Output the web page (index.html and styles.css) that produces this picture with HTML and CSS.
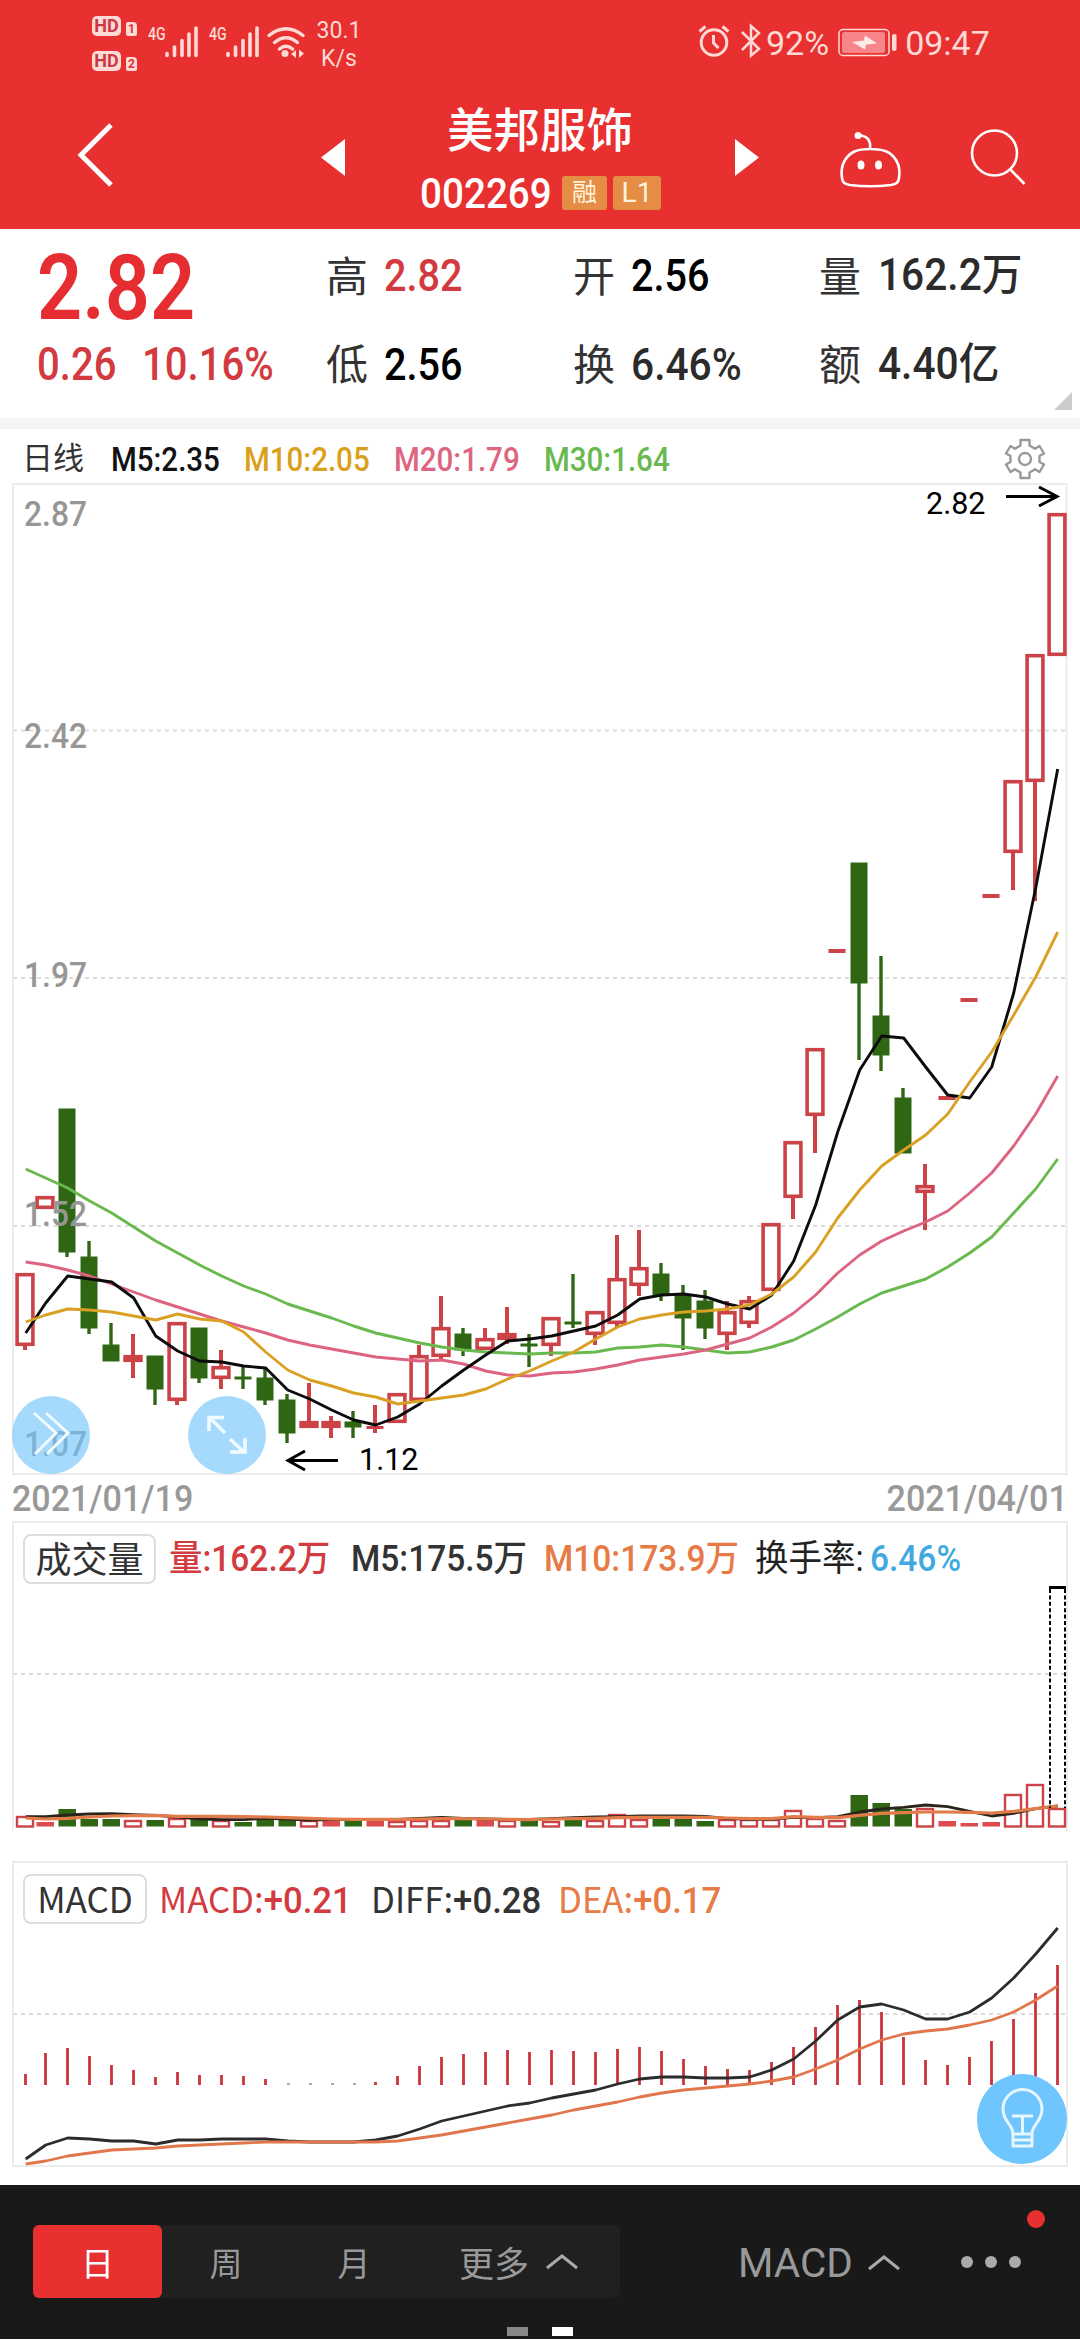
FILE: index.html
```html
<!DOCTYPE html>
<html lang="zh-CN">
<head>
<meta charset="utf-8">
<title>美邦服饰 002269</title>
<link rel="stylesheet" href="styles.css">
</head>
<body>
<header class="top">
  <div class="status">
    <div class="hd-stack">
      <div class="hd"><b>HD</b><i>1</i></div>
      <div class="hd"><b>HD</b><i>2</i></div>
    </div>
    <div class="signal"><span>4G</span><svg width="33" height="32" viewBox="0 0 33 32"><path d="M2 27.5v2M9.500 21v8.500M17 14.500v15M24 8v21.500M31 2v27.500"/></svg></div>
    <div class="signal"><span>4G</span><svg width="33" height="32" viewBox="0 0 33 32"><path d="M2 27.5v2M9.500 21v8.500M17 14.500v15M24 8v21.500M31 2v27.500"/></svg></div>
    <svg class="wifi" width="38" height="32" viewBox="0 0 38 32"><path d="M2 8.500Q19-5 36 8.500M7.500 15.500Q19 6 30.500 15.500M12.500 22Q19 16.500 25.500 22" fill="none" stroke="currentColor" stroke-width="3.500" stroke-linecap="round"/><circle cx="18" cy="26.500" r="3.500" fill="currentColor"/><path d="M29 23v8l-5-4zM32 22.500v8.500l5-4.500z" fill="currentColor"/></svg>
    <div class="speed">30.1<br>K/s</div>
    <div class="status-right">
      <svg width="32" height="34" viewBox="0 0 32 34" fill="none" stroke="currentColor" stroke-width="3"><circle cx="16" cy="18.500" r="12.800"/><path d="M15.500 11v8l5 5M1.500 7.500l6-5M24.500 2.500l6 5"/></svg>
      <svg class="bt" width="22" height="34" viewBox="0 0 22 34" fill="none" stroke="currentColor" stroke-width="2.500"><path d="M2 8l17 17-8 6.500V2l8 7L2 26"/></svg>
      <span class="pct">92%</span>
      <svg class="battery" width="60" height="30" viewBox="0 0 60 30"><rect x="1" y="1.500" width="50" height="26" rx="4" fill="none" stroke="currentColor" stroke-width="1.500"/><rect x="4" y="4" width="43" height="21" rx="2" fill="#f8858a"/><path d="M14 14l12-1.500 1-5 12 8-11 1-1 5z" fill="#ffeae6"/><rect x="54" y="6" width="4.500" height="17" rx="2" fill="currentColor"/></svg>
      <span>09:47</span>
    </div>
  </div>
  <nav class="titlebar">
    <svg class="back" width="40" height="70" viewBox="0 0 40 70"><path d="M36 5L6 35l30 30" fill="none" stroke="#fff" stroke-width="5"/></svg>
    <svg class="prev" width="24" height="37" viewBox="0 0 24 37"><path d="M24 0v37L0 18.500z" fill="#fff"/></svg>
    <div class="name">
      <h1>美邦服饰</h1>
      <div class="code"><span class="din">002269</span><em>融</em><em>L1</em></div>
    </div>
    <svg class="next" width="24" height="37" viewBox="0 0 24 37"><path d="M0 0v37l24-18.500z" fill="#fff"/></svg>
    <svg class="robot" width="64" height="60" viewBox="0 0 64 60" fill="none" stroke="#fff" stroke-width="2.600"><path d="M32 21c14 0 21 3 26 11 3 5 4 12 3 18-.6 5-3 6-8 7-12 1.500-29 1.500-41 0-5-.8-7.500-2-8-7-1-6 0-13 3-18 5-8 12-11 25-11zM32 21c1-9-3-13.500-11-13.500"/><circle cx="20" cy="7.500" r="3.500" fill="#fff" stroke="none"/><ellipse cx="23" cy="37" rx="3.500" ry="4.500" fill="#fff" stroke="none"/><ellipse cx="40.500" cy="37" rx="3.500" ry="4.500" fill="#fff" stroke="none"/></svg>
    <svg class="search" width="58" height="58" viewBox="0 0 58 58" fill="none" stroke="#fff" stroke-width="2.600"><circle cx="25.500" cy="25" r="22.500"/><path d="M41 41l14.500 15"/></svg>
  </nav>
</header>

<section class="quote">
  <div class="price din">2.82</div>
  <div class="change"><span class="din">0.26</span><span class="din">10.16%</span></div>
  <dl class="c-high"><dt>高</dt><dd class="din up">2.82</dd></dl>
  <dl class="c-open"><dt>开</dt><dd class="din">2.56</dd></dl>
  <dl class="c-vol soft"><dt>量</dt><dd class="mix">162.2万</dd></dl>
  <dl class="c-low"><dt>低</dt><dd class="din">2.56</dd></dl>
  <dl class="c-turn soft"><dt>换</dt><dd class="din">6.46%</dd></dl>
  <dl class="c-amt soft"><dt>额</dt><dd class="mix">4.40亿</dd></dl>
  <i class="corner"></i>
</section>

<section class="ma-row">
  <span class="period">日线</span>
  <span class="din m5">M5:2.35</span>
  <span class="din m10">M10:2.05</span>
  <span class="din m20">M20:1.79</span>
  <span class="din m30">M30:1.64</span>
  <svg class="gear" width="42" height="42" viewBox="0 0 42 42" fill="none" stroke="#999" stroke-width="2.400" stroke-linejoin="round"><path d="M16.500 2h9v5.500l5.500 3.300 4.500-2.800 4.500 7.500-4.500 2.500v6l4.500 2.500-4.500 7.500-4.500-2.800-5.500 3.300V40h-9v-5.500L11 31.200 6.500 34 2 26.500 6.500 24v-6L2 15.500 6.500 8l4.500 2.800 5.500-3.300z"/><circle cx="21" cy="21" r="6"/></svg>
</section>

<section class="kline">
  <svg id="kline" width="1080" height="992" viewBox="0 483 1080 992"></svg>
  <button class="float expand"><svg width="78" height="78" viewBox="0 0 78 78"><path d="M22 17l22 20-21 21M34 17l22 20-21 21"/></svg></button>
  <button class="float full"><svg width="78" height="78" viewBox="0 0 78 78"><path d="M37 37L22 22M21 35V21.500h15M42 43l15 14M57 42v14H42" /></svg></button>
</section>
<div class="dates"><span class="din">2021/01/19</span><span class="din end">2021/04/01</span></div>

<section class="panel volume">
  <div class="legend">
    <span class="pill">成交量</span>
    <span class="v1">量:162.2万</span>
    <span class="v2">M5:175.5万</span>
    <span class="v3">M10:173.9万</span>
    <span class="v4">换手率:</span>
    <span class="v5">6.46%</span>
  </div>
  <svg id="volume" width="1080" height="248" viewBox="0 1584 1080 248"></svg>
</section>

<section class="panel macd">
  <div class="legend">
    <span class="pill">MACD</span>
    <span class="d1"><u>MACD:</u>+0.21</span>
    <span class="d2"><u>DIFF:</u>+0.28</span>
    <span class="d3"><u>DEA:</u>+0.17</span>
  </div>
  <svg id="macd" width="1080" height="242" viewBox="0 1924 1080 242"></svg>
  <button class="bulb"><svg width="90" height="90" viewBox="0 0 90 90" fill="none" stroke="#e6f6ff" stroke-width="3"><path d="M36 60c0-10-10-12-10-25a19 19 0 0 1 39 0c0 13-10 15-10 25zM36 60v12h19V60M36 66h19M35 42h21M45.500 42v17" stroke-linejoin="round"/></svg></button>
</section>

<footer class="tabs">
  <div class="segment">
    <button class="active">日</button><button>周</button><button>月</button>
    <button class="more">更多<svg width="34" height="20" viewBox="0 0 34 20"><path d="M2 16L17 4l15 12"/></svg></button>
  </div>
  <button class="indicator">MACD<svg width="34" height="20" viewBox="0 0 34 20"><path d="M2 16L17 4l15 12"/></svg></button>
  <div class="dots"><i></i><i></i><i></i><b></b></div>
  <div class="pages"><i></i><i class="on"></i></div>
</footer>
<script src="chart.js"></script>
</body>
</html>
```
FILE: styles.css
```css
* { box-sizing: border-box; margin: 0; padding: 0; }
body {
  width: 1080px; height: 2340px; overflow: hidden; background: #fff; color: #000;
  font-family: Roboto, "Noto Sans CJK SC", sans-serif;
  display: flex; flex-direction: column;
}
button { border: 0; background: none; font: inherit; color: inherit; }
svg { display: block; flex: none; overflow: visible; }
i, em { font-style: normal; }
u { text-decoration: none; }
.din { display: inline-block; font-weight: 500; transform: scaleX(.88); transform-origin: left center; white-space: nowrap; }

.top { height: 229px; background: #e83030; color: #ffd9d4; }
.status { height: 80px; display: flex; align-items: flex-start; padding-left: 92px; }
.hd-stack { display: flex; flex-direction: column; gap: 14px; margin-top: 15px; width: 56px; }
.hd { display: flex; gap: 5px; align-items: flex-end; height: 21px; }
.hd b { width: 29px; height: 20px; border-radius: 5px; background: #ffd9d4; color: #c93a44; font: 700 18px/20px Roboto, sans-serif; text-align: center; }
.hd i { width: 11px; height: 14px; border-radius: 2px 4px 2px 2px; background: #ffd9d4; color: #d43138; font: 700 12px/14px Roboto, sans-serif; text-align: center; }
.signal { display: flex; width: 61px; padding-top: 26px; }
.signal span { font-size: 19px; line-height: 16px; font-weight: 500; width: 25px; transform: scaleX(.74); transform-origin: left; margin-right: -8px; }
.signal svg { stroke: currentColor; stroke-width: 3.600; stroke-linecap: round; }
.wifi { margin: 27px 0 0 -3px; }
.speed { margin: 17px 0 0 11px; font-size: 23px; line-height: 28px; text-align: center; width: 46px; }
.status-right { display: flex; margin: 24px 0 0 336px; font-size: 34px; line-height: 38px; }
.status-right .bt { margin-left: 10px; }
.status-right .pct { margin: 0 9px 0 4px; }
.status-right .battery { margin: 4px 7px 0 0; }
.titlebar { height: 149px; display: flex; align-items: flex-start; }
.back { margin: 40px 0 0 75px; }
.prev { margin: 59px 0 0 206px; }
.name { width: 390px; text-align: center; color: #fff; padding-top: 23px; }
.name h1 { font-size: 46.500px; line-height: 56px; font-weight: 500; }
.code { display: flex; padding: 16px 0 0 75px; align-items: center; height: 52px; }
.code .din { font-size: 42px; width: 142px; transform: scaleX(.92); text-align: left; }
.code em { height: 34px; width: 45px; background: #e58d45; border-radius: 3px; font-size: 25px; line-height: 34px; color: #fff3dd; margin-right: 6px; }
.code em + em { width: 48px; font-size: 28px; }
.next { margin: 59px 0 0 0; }
.robot { margin: 48px 0 0 79px; }
.robot + .search { margin: 48px 0 0 67px; }

.quote {
  position: relative; height: 200px; border-bottom: 11px solid #f5f5f5; padding: 4px 0 0 37px;
  display: grid; grid-template: 86px 88px / 289px 247px 246px 1fr; color: #000;
  grid-template-areas: "price high open vol" "change low turn amt";
}
.price { grid-area: price; font-size: 91px; font-weight: 600; line-height: 111px; color: #e62d31; transform: scaleX(.87); }
.change { grid-area: change; display: grid; grid-template-columns: 105px auto; font-size: 45.500px; line-height: 92px; color: #d33a40; }
.quote dl { display: grid; grid-template-columns: 58px 1fr; line-height: 86px; white-space: nowrap; }
.quote dt { font-size: 42px; line-height: 82px; color: #333; font-family: "Noto Sans CJK SC", sans-serif; }
.quote dd { font-size: 45px; }
.c-high { grid-area: high; } .c-open { grid-area: open; } .c-vol { grid-area: vol; }
.c-low { grid-area: low; } .c-turn { grid-area: turn; } .c-amt { grid-area: amt; }
.quote .c-low, .quote .c-turn, .quote .c-amt { line-height: 91px; }
.c-low dt, .c-turn dt, .c-amt dt { line-height: 86px !important; }
.quote .up { color: #d33a40; }
.soft { color: #2b2b2b; }
.c-turn .din { transform: scaleX(.905); }
.mix { font-weight: 500; font-size: 43.500px !important; transform: scaleX(.935); transform-origin: left; margin-left: 1px; }
.corner { position: absolute; right: 8px; bottom: 8px; border-left: 18px solid transparent; border-bottom: 18px solid #ccc; }

.ma-row { height: 54px; padding-left: 22px; display: grid; grid-template-columns: 89px 133px 150px 150px 460px 42px; line-height: 61px; font-size: 34px; color: #111; }
.ma-row .din { transform: scaleX(.868); }
.period { font-size: 31px; line-height: 60px; color: #333; }
.m10 { color: #dba01b; } .m20 { color: #dd6580; } .m30 { color: #69b850; }
.gear { margin-top: 9px; }

.kline { position: relative; height: 992px; }
.float { position: absolute; top: 913px; width: 78px; height: 78px; border-radius: 50%; background: rgba(110, 196, 252, .62); }
.float path { fill: none; stroke: #f2faff; stroke-width: 3; }
.expand { left: 12px; } .full { left: 188px; }
.full path { stroke-width: 3.500; }
.dates { height: 46px; display: flex; justify-content: space-between; padding: 0 12px; font-size: 36px; line-height: 48px; color: #999; }
.dates .din { transform: scaleX(.945); }
.dates .end { transform-origin: right center; }

.panel { position: relative; margin: 0 12px; border: 2px solid #ececec; }
.panel > svg { margin-left: -14px; }
.volume { height: 310px; border-bottom: 0; }
.macd { height: 306px; margin-top: 30px; }
.legend { height: 61px; padding: 11px 0 0 9px; display: grid; font-size: 36px; line-height: 50px; font-weight: 500; white-space: nowrap; }
.legend span { transform-origin: left center; }
.legend .pill { height: 50px; line-height: 43px; border: 2px solid #ddd; border-radius: 8px; text-align: center; font-weight: 400; color: #333; font-family: "Noto Sans CJK SC", sans-serif; font-size: 36px; }
.volume .legend { grid-template-columns: 133px 195px 193px 211px 112px auto; }
.volume .legend .v1 { margin-left: 13px; }
.volume .legend span:not(.pill) { transform: scaleX(.93); }
.v1 { color: #d23b40; } .v2 { color: #333; } .v3 { color: #e77a45; }
.volume .legend .v4 { color: #222; font-weight: 400; font-size: 36px; transform: none; }
.volume .legend .v5 { color: #41a9e0; transform: scaleX(.9); margin-left: 3px; }
.macd .legend { grid-template-columns: 124px 224px 187px auto; font-size: 36px; line-height: 46px; }
.macd u { font-weight: 400; font-family: "Noto Sans CJK SC", sans-serif; }
.macd .legend .pill { font-size: 35px; }
.d1 { margin-left: 12px; color: #d23b40; } .d2 { color: #333; } .d3 { color: #e77a45; }
.macd .legend span:not(.pill) { transform: scaleX(.965); }
.bulb { position: absolute; left: 963px; top: 211px; width: 90px; height: 90px; border-radius: 50%; background: #6fc5fd; }

.tabs { position: relative; margin-top: 18px; height: 154px; background: #191919; color: #999; display: flex; align-items: flex-start; padding: 40px 0 0 33px; font-family: "Noto Sans CJK SC", sans-serif; }
.segment { width: 587px; height: 73px; background: #202020; display: flex; border-radius: 5px; }
.segment button { width: 128px; font-size: 33px; }
.segment .active { background: #e83030; color: #fff; border-radius: 6px; width: 129px; }
.segment .more { width: auto; padding-left: 41px; display: flex; align-items: center; gap: 16px; font-size: 35px; }
.tabs svg path { fill: none; stroke: #aaa; stroke-width: 3; }
.indicator { display: flex; align-items: center; gap: 14px; margin-left: 118px; height: 76px; font: 400 40.500px Roboto, sans-serif; }
.dots { position: relative; display: flex; gap: 12px; margin: 31px 0 0 60px; }
.dots i { width: 12px; height: 12px; border-radius: 50%; background: #aaa; }
.dots b { position: absolute; left: 66px; top: -46px; width: 18px; height: 18px; border-radius: 50%; background: #e83030; }
.pages { position: absolute; left: 507px; bottom: 3px; display: flex; gap: 24px; }
.pages i { width: 21px; height: 9px; background: #888; }
.pages .on { background: #fff; }
```
FILE: chart.js
```js
const X = i => (i === 0 ? 25 : 23 + 22 * i);
const RED = '#cb4247', GREEN = '#2e6614';
const line = (ys, color, w) =>
  `<polyline fill="none" stroke="${color}" stroke-width="${w}" stroke-linejoin="round" points="${ys.map((y, i) => (X(i) + 0.7) + ',' + y).join(' ')}"/>`;
const grid = y => `<path d="M13 ${y}H1066" stroke="#dcdcdc" stroke-width="2" stroke-dasharray="4 4"/>`;

// colour, body top, body bottom, high, low
const candles = [
  ['r',1273,1346,1273,1350],['r',1196,1209],['g',1109,1252,1109,1257],['g',1257,1328,1241,1334],
  ['g',1345,1361,1323,1361],['r',1355,1362,1334,1378],['g',1356,1389,1356,1405],['r',1322,1401,1322,1405],
  ['g',1328,1378,1328,1383],['r',1366,1379,1350,1389],['g',1377,1379,1367,1389],['g',1378,1400,1367,1405],
  ['g',1400,1433,1394,1443],['r',1421,1428,1383,1428],['r',1421,1428,1416,1438],['g',1422,1427,1411,1438],
  ['r',1426,1429,1405,1433],['r',1393,1423],['r',1355,1401,1345,1401],['r',1327,1357,1296,1359],
  ['g',1334,1350,1328,1356],['r',1338,1350,1328,1350],['r',1333,1340,1307,1344],['g',1344,1346,1334,1367],
  ['r',1317,1346,1317,1356],['g',1322,1324,1274,1328],['r',1311,1335,1311,1345],['r',1278,1324,1235,1328],
  ['r',1267,1286,1230,1296],['g',1274,1295,1263,1301],['g',1295,1318,1285,1350],['g',1301,1328,1290,1339],
  ['r',1311,1335,1301,1350],['r',1300,1324,1296,1328],['r',1223,1291],['r',1141,1198,1141,1219],
  ['r',1048,1116,1048,1153],['r',949,953],['g',863,983,863,1060],['g',1016,1055,956,1071],
  ['g',1098,1153,1088,1153],['r',1185,1193,1164,1230],['r',1096,1100],['r',998,1002],
  ['r',894,898],['r',780,853,780,890],['r',654,782,654,901],['r',513,656]
];
const m5 = [1333,1303,1276,1279,1282,1298,1336,1351,1361,1362,1366,1368,1390,1399,1410,1420,1425,1417,1404,1386,1370,1355,1341,1339,1336,1331,1326,1315,1299,1295,1294,1297,1304,1309,1295,1261,1205,1132,1070,1036,1038,1067,1095,1098,1067,993,888,769];
const m10 = [1322,1315,1309,1310,1312,1316,1320,1314,1319,1321,1332,1352,1370,1380,1386,1393,1397,1404,1401,1398,1395,1389,1379,1371,1361,1352,1339,1327,1319,1315,1312,1311,1309,1305,1294,1277,1252,1218,1190,1166,1150,1135,1114,1082,1052,1015,977,932];
const m20 = [1262,1265,1270,1276,1284,1292,1300,1307,1314,1321,1327,1333,1340,1345,1349,1353,1357,1359,1361,1360,1364,1371,1375,1376,1373,1372,1369,1365,1360,1357,1354,1350,1344,1338,1327,1313,1295,1273,1255,1241,1231,1222,1211,1193,1173,1146,1114,1076];
const m30 = [1169,1178,1188,1201,1213,1227,1241,1253,1265,1276,1286,1294,1304,1311,1318,1326,1333,1338,1343,1347,1350,1352,1353,1354,1353,1353,1352,1348,1347,1345,1347,1350,1353,1352,1347,1340,1329,1317,1304,1293,1286,1279,1267,1253,1237,1213,1189,1159];

let s = '<rect x="13" y="484" width="1053.500" height="990" fill="none" stroke="#ececec" stroke-width="2"/>';
s += grid(730.5) + grid(978) + grid(1226);
candles.forEach(([c, t, b, h, l], i) => {
  const x = X(i), col = c === 'r' ? RED : GREEN;
  if (c === 'g') {
    s += `<rect x="${x - 8.5}" y="${t - 0.5}" width="17" height="${b - t + 1}" fill="${GREEN}"/><path d="M${x} ${h}V${l}" stroke="${GREEN}" stroke-width="3.400"/>`;
    return;
  }
  if (b - t < 5) s += `<rect x="${x - 8.5}" y="${t}" width="17" height="${b - t}" fill="${RED}"/>`;
  else s += `<rect x="${x - 7.9}" y="${t + 1.7}" width="15.800" height="${b - t - 3.4}" fill="none" stroke="${RED}" stroke-width="3.600"/>`;
  if (h !== undefined) s += `<path d="M${x} ${h}V${t}M${x} ${b}V${l}" stroke="${col}" stroke-width="4"/>`;
});
s += line(m30, '#69b94f', 2.9) + line(m20, '#dd6480', 2.9) + line(m5, '#0c0c0c', 2.9) + line(m10, '#daa024', 2.9);
[['2.87', 526], ['2.42', 748], ['1.97', 987], ['1.52', 1226], ['1.07', 1456]].forEach(([t, y]) => {
  s += `<text x="24" y="${y}" font-size="35" font-weight="500" fill="#969696" textLength="63" lengthAdjust="spacingAndGlyphs">${t}</text>`;
});
s += '<text x="926" y="514" font-size="30.500">2.82</text><text x="359" y="1470" font-size="30.500">1.12</text>';
s += '<path d="M1006 496.500H1057M1039 487l18 9.500l-18 9.500M338 1460.500H288M305 1451l-17 9.500l17 9.500" fill="none" stroke="#000" stroke-width="3"/>';
document.getElementById('kline').innerHTML = s;

// colour (f = filled red) and bar top
const vol = [['r',1816],['f',1822],['g',1809],['g',1819],['g',1819],['r',1820],['g',1820],['r',1818],['g',1819],['r',1820],['g',1822],['g',1820],['g',1820],['r',1820],['f',1820],['g',1821],['f',1821],['r',1821],['r',1820],['r',1820],['g',1820],['f',1820],['r',1820],['g',1821],['r',1821],['g',1820],['r',1820],['r',1814],['r',1819],['g',1819],['g',1819],['g',1821],['r',1819],['r',1819],['r',1819],['r',1810],['r',1818],['r',1820],['g',1795],['g',1803],['g',1809],['r',1808],['f',1821],['f',1823],['f',1822],['r',1794],['r',1784],['r',1808]];
const v5 = [140,140,135,132,131,134,136,141,147,149,149,145,147,150,149,149,149,148,145,142,145,147,148,148,146,143,141,140,138,138,138,139,146,148,148,142,143,140,126,117,112,105,110,124,138,130,116,108];
const v10 = [144,147,145,141,138,137,136,139,139,139,140,141,143,145,147,148,148,148,147,146,146,147,148,149,147,146,145,143,142,142,142,142,144,146,146,140,142,143,136,130,128,126,126,127,129,124,116,108];
s = grid(1674);
vol.forEach(([c, t], i) => {
  const x = X(i);
  if (c === 'r') s += `<rect x="${x - 8}" y="${t + 1}" width="16" height="${1825.5 - t}" fill="none" stroke="${RED}" stroke-width="2.400"/>`;
  else s += `<rect x="${x - 8.5}" y="${t}" width="17.500" height="${1826.5 - t}" fill="${c === 'g' ? GREEN : '#dc4b4d'}"/>`;
});
s += line(v5.map(v => 1770 + v / 3), '#2b241c', 2.8) + line(v10.map(v => 1770 + v / 3), '#e27b49', 3.2);
s += '<path d="M1049 1587.500H1066" stroke="#000" stroke-width="3"/><path d="M1050 1589V1808M1065 1589V1808" stroke="#000" stroke-width="2" stroke-dasharray="4 2.400"/>';
document.getElementById('volume').innerHTML = s;

const bars = [2074,2053,2048,2056,2065,2070,2077,2072,2075,2075,2076,2079,0,0,0,0,2082,2076,2066,2057,2054,2052,2050,2052,2050,2051,2052,2049,2047,2051,2059,2066,2069,2070,2062,2047,2027,2005,2000,2012,2037,2060,2065,2057,2041,2019,1993,1965];
const diff = [2159,2145,2138,2139,2141,2141,2144,2140,2140,2139,2139,2139,2141,2142,2142,2142,2140,2136,2129,2121,2116,2111,2106,2103,2098,2094,2090,2084,2079,2077,2077,2078,2078,2077,2070,2059,2041,2020,2007,2004,2010,2019,2019,2012,1998,1978,1954,1928];
const dea = [2164,2161,2156,2153,2150,2149,2148,2146,2145,2144,2143,2142,2142,2142,2142,2142,2142,2141,2138,2135,2131,2127,2123,2119,2115,2110,2106,2102,2097,2093,2090,2088,2086,2084,2081,2077,2069,2060,2049,2040,2034,2031,2029,2025,2020,2012,2000,1986];
s = grid(2014);
bars.forEach((t, i) => {
  s += t ? `<path d="M${X(i) + 0.5} ${t}V2085" stroke="#c9343a" stroke-width="2.800"/>`
         : `<rect x="${X(i)}" y="2083" width="3" height="2" fill="#aaa"/>`;
});
s += line(diff, '#2c2c2c', 2.8) + line(dea, '#e0764a', 2.8);
document.getElementById('macd').innerHTML = s;
```
